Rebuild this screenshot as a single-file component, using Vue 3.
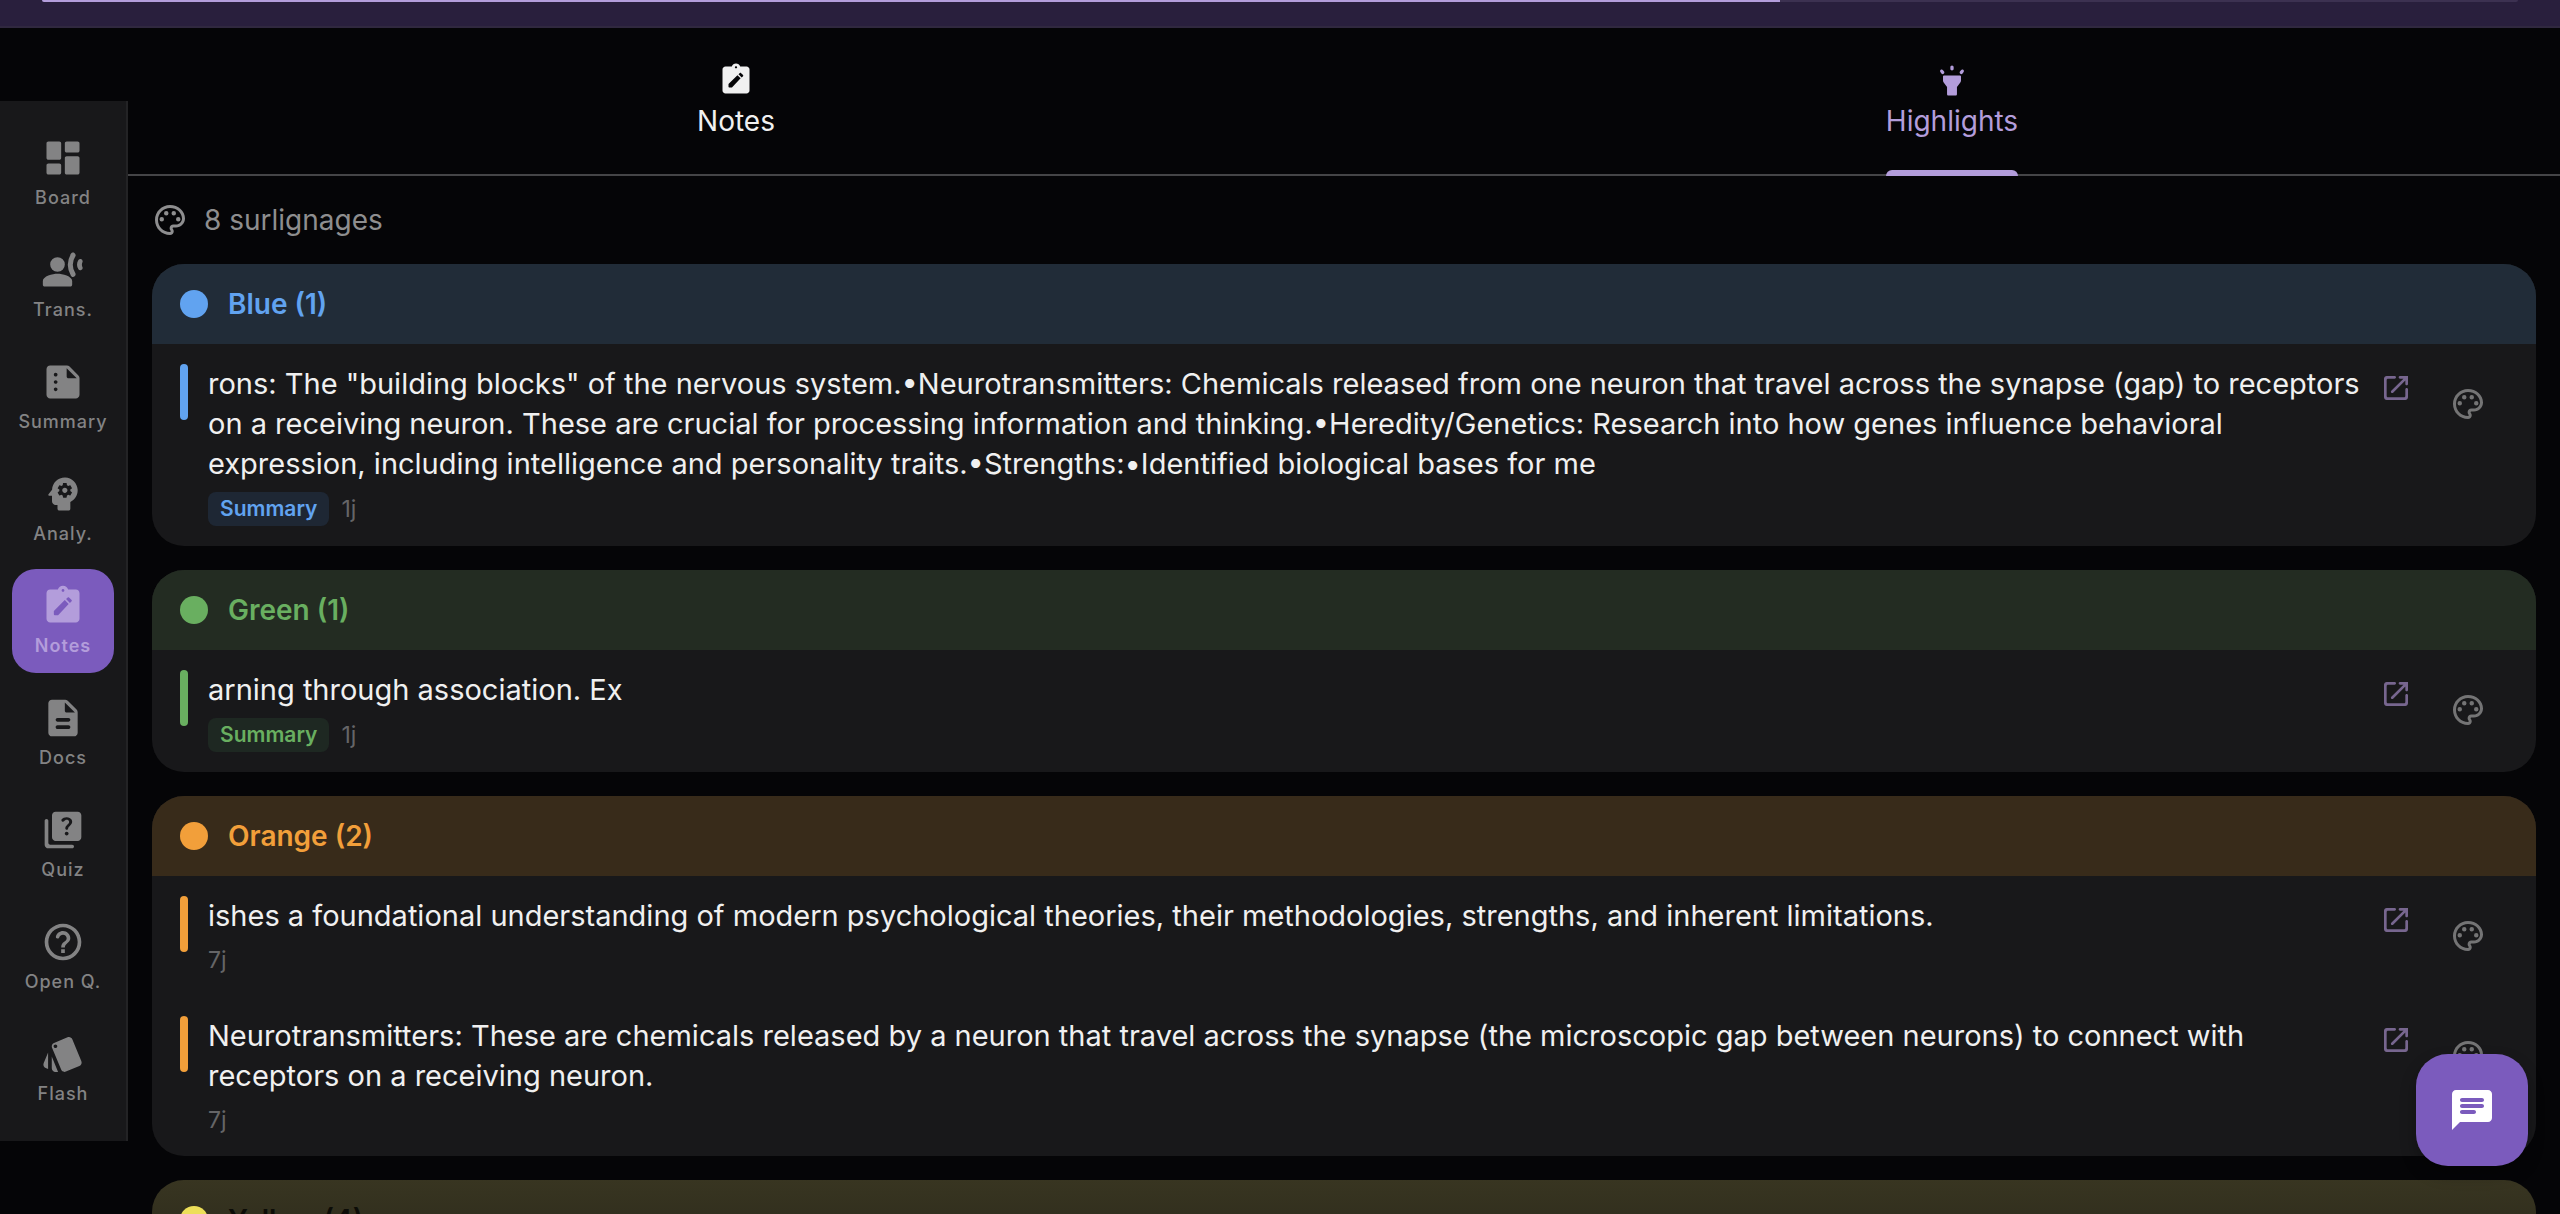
<script setup>
import { ref } from 'vue'

const activeTab = ref('highlights')
const activeNav = ref('notes')

const icons = {
  board: 'M4 13h6c.55 0 1-.45 1-1V4c0-.55-.45-1-1-1H4c-.55 0-1 .45-1 1v8c0 .55.45 1 1 1zm0 8h6c.55 0 1-.45 1-1v-4c0-.55-.45-1-1-1H4c-.55 0-1 .45-1 1v4c0 .55.45 1 1 1zm10 0h6c.55 0 1-.45 1-1v-8c0-.55-.45-1-1-1h-6c-.55 0-1 .45-1 1v8c0 .55.45 1 1 1zM13 4v4c0 .55.45 1 1 1h6c.55 0 1-.45 1-1V4c0-.55-.45-1-1-1h-6c-.55 0-1 .45-1 1z',
  voice: 'M9 5a4 4 0 1 0 0 8 4 4 0 0 0 0-8zm0 9c-2.67 0-8 1.34-8 4v2c0 .55.45 1 1 1h14c.55 0 1-.45 1-1v-2c0-2.66-5.33-4-8-4zM16.3 3.2a12 12 0 0 0 0 11.9c.4.7 1.3.9 1.9.5.7-.5.9-1.3.5-2a8 8 0 0 1 0-8.9c.4-.7.2-1.5-.5-2-.6-.4-1.5-.2-1.9.5zM20.4 6.6c-1 1.6-1 3.4 0 5 .3.6 1 .7 1.6.4.6-.3.9-.9.6-1.6-.4-.8-.4-1.8 0-2.6.3-.6 0-1.3-.6-1.6-.6-.3-1.2-.1-1.6.4z',
  summary: 'M14.17 3H5c-1.1 0-2 .9-2 2v14c0 1.1.9 2 2 2h14c1.1 0 2-.9 2-2V9.83c0-.53-.21-1.04-.59-1.41l-4.83-4.83c-.37-.38-.88-.59-1.41-.59zM8 17c-.55 0-1-.45-1-1s.45-1 1-1 1 .45 1 1-.45 1-1 1zm0-4c-.55 0-1-.45-1-1s.45-1 1-1 1 .45 1 1-.45 1-1 1zm0-4c-.55 0-1-.45-1-1s.45-1 1-1 1 .45 1 1-.45 1-1 1zm6 0V4.5l5.5 5.5H15c-.55 0-1-.45-1-1z',
  analysis: 'M13 8.57c-.79 0-1.43.64-1.43 1.43s.64 1.43 1.43 1.43 1.43-.64 1.43-1.43-.64-1.43-1.43-1.43zM13.21 3c-3.84-.11-7 2.87-7.19 6.64l-1.92 2.53c-.25.33-.01.83.4.83H6v3c0 1.1.9 2 2 2h1v2c0 .55.45 1 1 1h5c.55 0 1-.45 1-1v-3.68c2.44-1.16 4.1-3.68 4-6.58C19.86 6.11 16.83 3.1 13.21 3zM16 10c0 .13-.01.26-.02.39l.83.66c.08.06.1.16.05.25l-.8 1.39c-.05.09-.16.12-.24.09l-.99-.4c-.21.16-.43.29-.67.39L14 13.83c-.01.1-.1.17-.2.17h-1.6c-.1 0-.18-.07-.2-.17l-.15-1.06c-.25-.1-.47-.23-.68-.39l-.99.4c-.09.03-.2 0-.25-.09l-.8-1.39c-.05-.08-.03-.19.05-.25l.84-.66c-.01-.13-.02-.26-.02-.39s.02-.27.04-.39l-.85-.66c-.08-.06-.1-.16-.05-.26l.8-1.38c.05-.09.15-.12.24-.09l1 .4c.2-.15.43-.29.67-.39L12 6.17c.02-.1.1-.17.2-.17h1.6c.1 0 .18.07.2.17l.15 1.06c.24.1.46.23.67.39l1-.4c.09-.03.2 0 .24.09l.8 1.38c.05.09.03.2-.05.26l-.85.66c.03.12.04.25.04.39z',
  notes: 'M19 3h-4.18C14.4 1.84 13.3 1 12 1s-2.4.84-2.82 2H5c-1.1 0-2 .9-2 2v14c0 1.1.9 2 2 2h14c1.1 0 2-.9 2-2V5c0-1.1-.9-2-2-2zm-7-.25c.41 0 .75.34.75.75s-.34.75-.75.75-.75-.34-.75-.75.34-.75.75-.75zM9.1 17H7.5c-.28 0-.5-.22-.5-.5v-1.59c0-.13.05-.26.15-.35l5.81-5.79 2.12 2.12-5.62 5.96c-.1.1-.22.15-.36.15zm7.6-7.55-.91.91-2.12-2.12.91-.91c.2-.2.51-.2.71 0l1.41 1.41c.2.2.2.51 0 .71z',
  docs: 'M14.59 2.59c-.38-.38-.89-.59-1.42-.59H6c-1.1 0-2 .9-2 2v16c0 1.1.89 2 1.99 2H18c1.1 0 2-.9 2-2V8.83c0-.53-.21-1.04-.59-1.41l-4.82-4.83zM15 18H9c-.55 0-1-.45-1-1s.45-1 1-1h6c.55 0 1 .45 1 1s-.45 1-1 1zm0-4H9c-.55 0-1-.45-1-1s.45-1 1-1h6c.55 0 1 .45 1 1s-.45 1-1 1zm-2-6V3.5L18.5 9H14c-.55 0-1-.45-1-1z',
  quiz: 'M3 6c-.55 0-1 .45-1 1v13c0 1.1.9 2 2 2h13c.55 0 1-.45 1-1s-.45-1-1-1H5c-.55 0-1-.45-1-1V7c0-.55-.45-1-1-1zM20 2H8c-1.1 0-2 .9-2 2v12c0 1.1.9 2 2 2h12c1.1 0 2-.9 2-2V4c0-1.1-.9-2-2-2zm-5.99 13c-.59 0-1.05-.47-1.05-1.05 0-.59.47-1.04 1.05-1.04.59 0 1.04.45 1.04 1.04-.01.58-.45 1.05-1.04 1.05zm2.5-6.17c-.63.93-1.23 1.21-1.56 1.81-.08.14-.13.26-.16.49-.05.39-.36.68-.75.68h-.03c-.44 0-.79-.38-.75-.82.03-.28.09-.57.25-.84.41-.73 1.18-1.16 1.63-1.8.48-.68.21-1.94-1.14-1.94-.61 0-1.01.32-1.26.7-.24.35-.67.51-1.06.35-.51-.2-.72-.82-.4-1.27C11.88 5.48 12.8 5 13.99 5c1.3 0 2.2.59 2.65 1.33.39.64.62 1.83-.13 2.5z',
  help: 'M11 16h2v2h-2zm1-14C6.48 2 2 6.48 2 12s4.48 10 10 10 10-4.48 10-10S17.52 2 12 2zm0 18c-4.41 0-8-3.59-8-8s3.59-8 8-8 8 3.59 8 8-3.59 8-8 8zm0-14c-1.86 0-3.42 1.26-3.87 2.97-.15.55.25 1.09.82 1.09h.2c.4 0 .72-.3.85-.68C10.28 8.57 11.07 8 12 8c1.1 0 2 .9 2 2 0 2-3 1.75-3 5h2c0-2.25 3-2.5 3-5 0-2.21-1.79-4-4-4z',
  flash: 'M2.53 19.65l1.34.56v-9.03l-2.43 5.86c-.41 1.02.08 2.19 1.09 2.61zm19.5-3.7L17.07 3.98c-.31-.75-1.04-1.21-1.81-1.23-.26 0-.53.04-.79.15L7.1 5.95c-.75.31-1.21 1.03-1.23 1.8-.01.27.04.54.15.8l4.96 11.97c.31.76 1.05 1.22 1.83 1.23.26 0 .52-.05.77-.15l7.36-3.05c1.02-.42 1.51-1.59 1.09-2.6zM7.88 8.75c-.55 0-1-.45-1-1s.45-1 1-1 1 .45 1 1-.45 1-1 1zm-2 11c0 1.1.9 2 2 2h1.45l-3.45-8.34v6.34z',
  torch: 'M6.6 9h10.8c.33 0 .6.27.6.6v2.7c0 .5-.15.9-.45 1.3L15.3 16.6v4.9c0 .55-.35.9-.9.9H9.6c-.55 0-.9-.35-.9-.9v-4.9L6.45 13.6c-.3-.4-.45-.8-.45-1.3V9.6c0-.33.27-.6.6-.6zM12 2.4c-.65 0-1.1.5-1.1 1.1v1c0 .6.45 1.1 1.1 1.1s1.1-.5 1.1-1.1v-1c0-.6-.45-1.1-1.1-1.1zM4.5 5.2c-.5.35-.6 1-.25 1.5l.7.95c.35.5 1 .6 1.5.25s.6-1 .25-1.5L6 5.45c-.35-.5-1-.6-1.5-.25zM19.5 5.2c-.5-.35-1.15-.25-1.5.25l-.7.95c-.35.5-.25 1.15.25 1.5s1.15.25 1.5-.25l.7-.95c.35-.5.25-1.15-.25-1.5z',
  palette: 'M12 22C6.49 22 2 17.51 2 12S6.49 2 12 2s10 4.04 10 9c0 3.31-2.69 6-6 6h-1.77c-.28 0-.5.22-.5.5 0 .12.05.23.13.33.41.47.64 1.06.64 1.67 0 1.38-1.12 2.5-2.5 2.5zm0-18c-4.41 0-8 3.59-8 8s3.59 8 8 8c.28 0 .5-.22.5-.5 0-.16-.08-.28-.14-.35-.41-.46-.63-1.05-.63-1.65 0-1.38 1.12-2.5 2.5-2.5H16c2.21 0 4-1.79 4-4 0-3.86-3.59-7-8-7zM6.5 10a1.5 1.5 0 1 0 0 3 1.5 1.5 0 0 0 0-3zm3-4a1.5 1.5 0 1 0 0 3 1.5 1.5 0 0 0 0-3zm5 0a1.5 1.5 0 1 0 0 3 1.5 1.5 0 0 0 0-3zm3 4a1.5 1.5 0 1 0 0 3 1.5 1.5 0 0 0 0-3z',
  open: 'M18 19H6c-.55 0-1-.45-1-1V6c0-.55.45-1 1-1h5c.55 0 1-.45 1-1s-.45-1-1-1H5c-1.11 0-2 .9-2 2v14c0 1.1.9 2 2 2h14c1.1 0 2-.9 2-2v-6c0-.55-.45-1-1-1s-1 .45-1 1v5c0 .55-.45 1-1 1zM14 4c0 .55.45 1 1 1h2.59l-9.13 9.13c-.39.39-.39 1.02 0 1.41.39.39 1.02.39 1.41 0L19 6.41V9c0 .55.45 1 1 1s1-.45 1-1V3h-6c-.55 0-1 .45-1 1z',
  chat: 'M20 2H4c-1.1 0-1.99.9-1.99 2L2 22l4-4h14c1.1 0 2-.9 2-2V4c0-1.1-.9-2-2-2zm-7 12H7c-.55 0-1-.45-1-1s.45-1 1-1h6c.55 0 1 .45 1 1s-.45 1-1 1zm4-3H7c-.55 0-1-.45-1-1s.45-1 1-1h10c.55 0 1 .45 1 1s-.45 1-1 1zm0-3H7c-.55 0-1-.45-1-1s.45-1 1-1h10c.55 0 1 .45 1 1s-.45 1-1 1z',
}

const navItems = [
  { id: 'board', label: 'Board', icon: icons.board },
  { id: 'trans', label: 'Trans.', icon: icons.voice },
  { id: 'summary', label: 'Summary', icon: icons.summary },
  { id: 'analysis', label: 'Analy.', icon: icons.analysis },
  { id: 'notes', label: 'Notes', icon: icons.notes },
  { id: 'docs', label: 'Docs', icon: icons.docs },
  { id: 'quiz', label: 'Quiz', icon: icons.quiz },
  { id: 'open', label: 'Open Q.', icon: icons.help },
  { id: 'flash', label: 'Flash', icon: icons.flash },
]

const tabs = [
  { id: 'notes', label: 'Notes', icon: icons.notes },
  { id: 'highlights', label: 'Highlights', icon: icons.torch },
]

const groups = [
  {
    color: 'blue',
    title: 'Blue (1)',
    items: [
      {
        text: 'rons: The "building blocks" of the nervous system.•Neurotransmitters: Chemicals released from one neuron that travel across the synapse (gap) to receptors on a receiving neuron. These are crucial for processing information and thinking.•Heredity/Genetics: Research into how genes influence behavioral expression, including intelligence and personality traits.•Strengths:•Identified biological bases for me',
        tag: 'Summary',
        age: '1j',
      },
    ],
  },
  {
    color: 'green',
    title: 'Green (1)',
    items: [{ text: 'arning through association. Ex', tag: 'Summary', age: '1j' }],
  },
  {
    color: 'orange',
    title: 'Orange (2)',
    items: [
      {
        text: 'ishes a foundational understanding of modern psychological theories, their methodologies, strengths, and inherent limitations.',
        age: '7j',
      },
      {
        text: 'Neurotransmitters: These are chemicals released by a neuron that travel across the synapse (the microscopic gap between neurons) to connect with receptors on a receiving neuron.',
        age: '7j',
      },
    ],
  },
  { color: 'yellow', title: 'Yellow (4)', items: [] },
]
</script>

<template>
  <div class="app">
    <header class="topbar">
      <div class="progress">
        <div class="progress-value"></div>
      </div>
    </header>

    <div class="body">
      <nav class="sidebar">
        <button
          v-for="item in navItems"
          :key="item.id"
          type="button"
          class="nav-item"
          :class="{ active: item.id === activeNav }"
          @click="activeNav = item.id"
        >
          <svg class="nav-icon" viewBox="0 0 24 24" aria-hidden="true"><path :d="item.icon" /></svg>
          <span>{{ item.label }}</span>
        </button>
      </nav>

      <main class="content">
        <div class="tabs" role="tablist">
          <button
            v-for="tab in tabs"
            :key="tab.id"
            type="button"
            role="tab"
            class="tab"
            :class="{ active: tab.id === activeTab }"
            :aria-selected="tab.id === activeTab"
            @click="activeTab = tab.id"
          >
            <span class="tab-inner">
              <svg class="icon" viewBox="0 0 24 24" aria-hidden="true"><path :d="tab.icon" /></svg>
              <span>{{ tab.label }}</span>
            </span>
          </button>
        </div>

        <div class="list">
          <div class="count">
            <svg class="icon" viewBox="0 0 24 24" aria-hidden="true"><path :d="icons.palette" /></svg>
            <span>8 surlignages</span>
          </div>

          <section v-for="group in groups" :key="group.color" class="card" :class="group.color">
            <h2 class="card-header">
              <span class="dot"></span>
              <span>{{ group.title }}</span>
            </h2>
            <article v-for="item in group.items" :key="item.text" class="highlight">
              <span class="bar"></span>
              <div class="highlight-body">
                <p>{{ item.text }}</p>
                <div class="meta">
                  <span v-if="item.tag" class="tag">{{ item.tag }}</span>
                  <span class="age">{{ item.age }}</span>
                </div>
              </div>
              <button type="button" class="open" aria-label="Ouvrir">
                <svg viewBox="0 0 24 24" aria-hidden="true"><path :d="icons.open" /></svg>
              </button>
              <button type="button" class="recolor" aria-label="Couleur">
                <svg class="icon" viewBox="0 0 24 24" aria-hidden="true"><path :d="icons.palette" /></svg>
              </button>
            </article>
          </section>
        </div>
      </main>
    </div>

    <button type="button" class="fab" aria-label="Chat">
      <svg viewBox="0 0 24 24" aria-hidden="true"><path :d="icons.chat" /></svg>
    </button>
  </div>
</template>

<style>
body {
  background: #050507;
  overflow: hidden;
}
</style>

<style scoped>
.app {
  height: 100vh;
  display: flex;
  flex-direction: column;
  overflow: hidden;
  font-family: Inter, "Noto Sans", sans-serif;
  font-size: 28px;
  color: #f0f0f0;
}

button {
  padding: 0;
  border: 0;
  background: none;
  font: inherit;
  color: inherit;
  cursor: pointer;
}

svg {
  display: block;
  fill: currentColor;
}

.icon {
  width: 36px;
  height: 36px;
}

.topbar {
  flex: none;
  height: 26px;
  padding: 0 42px;
  background: #291f3d;
  border-bottom: 2px solid #30283f;
}

.progress {
  height: 2px;
  border-radius: 0 0 2px 2px;
  overflow: hidden;
  background: #3c3151;
}

.progress-value {
  width: 70.2%;
  height: 2px;
  background: #b39ddb;
}

.body {
  flex: 1;
  min-height: 0;
  display: flex;
}

/* side navigation */
.sidebar {
  flex: none;
  align-self: center;
  display: flex;
  flex-direction: column;
  gap: 8px;
  width: 102px;
  padding: 20px 12px;
  background: #18181a;
  border-right: 2px solid #232325;
}

.nav-item {
  display: flex;
  flex-direction: column;
  align-items: center;
  gap: 6px;
  padding: 15px 0;
  border-radius: 24px;
  font-size: 18px;
  font-weight: 500;
  line-height: 24px;
  letter-spacing: 1px;
  color: #838384;
}

.nav-item.active {
  background: #7b5bbd;
  color: #b39ddb;
  font-weight: 600;
}

.nav-icon {
  width: 44px;
  height: 44px;
}

.content {
  flex: 1;
  min-width: 0;
  display: flex;
  flex-direction: column;
}

/* tabs */
.tabs {
  flex: none;
  display: flex;
  height: 146px;
  border-bottom: 2px solid #454547;
}

.tab {
  flex: 1;
  display: flex;
  justify-content: center;
}

.tab-inner {
  display: flex;
  flex-direction: column;
  align-items: center;
  gap: 3px;
  height: 148px;
  padding-top: 34px;
  box-sizing: border-box;
  line-height: 40px;
}

.tab.active {
  color: #b39ddb;
}

.tab.active .tab-inner {
  position: relative;
}

.tab.active .tab-inner::after {
  content: "";
  position: absolute;
  left: 0;
  right: 0;
  bottom: 0;
  height: 6px;
  border-radius: 6px 6px 0 0;
  background: #b39ddb;
}

/* highlights */
.list {
  flex: 1;
  min-height: 0;
  padding: 24px 24px 0;
  display: flex;
  flex-direction: column;
  gap: 24px;
}

.count {
  flex: none;
  display: flex;
  align-items: center;
  gap: 16px;
  line-height: 40px;
  color: #8e8e8f;
}

.card {
  flex: none;
  border-radius: 32px;
  overflow: hidden;
  background: #18181a;
}

.card-header {
  display: flex;
  align-items: center;
  gap: 20px;
  height: 80px;
  margin: 0;
  padding: 0 28px;
  background: var(--tint);
  color: var(--accent);
  font-size: 28px;
  font-weight: 600;
}

.dot {
  width: 28px;
  height: 28px;
  border-radius: 50%;
  background: var(--accent);
}

.blue {
  --accent: #61a3f0;
  --tint: #212c38;
  --tag: #1e2734;
}

.green {
  --accent: #69af60;
  --tint: #232c22;
  --tag: #1e2822;
}

.orange {
  --accent: #f29f3a;
  --tint: #382b1a;
  --tag: #2d251b;
}

.yellow {
  --accent: #eddf59;
  --tint: linear-gradient(#383521, #2b291b);
}

.yellow .card-header {
  color: #0c0c07;
}

.highlight {
  display: flex;
  align-items: flex-start;
  padding: 20px 28px;
}

.bar {
  flex: none;
  width: 8px;
  height: 56px;
  margin-right: 20px;
  border-radius: 4px;
  background: var(--accent);
}

.highlight-body {
  flex: 1;
  min-width: 0;
  margin-right: 16px;
}

.highlight-body p {
  margin: 0 0 8px;
  font-size: 29px;
  line-height: 40px;
}

.meta {
  display: flex;
  align-items: center;
  gap: 12px;
  line-height: 32px;
}

.tag {
  padding: 4px 12px;
  border-radius: 8px;
  background: var(--tag);
  color: var(--accent);
  font-size: 21px;
  font-weight: 600;
  line-height: 26px;
}

.age {
  font-size: 23px;
  color: #656567;
}

.open {
  flex: none;
  margin: 8px 16px 0 0;
  color: #77668f;
}

.open svg {
  width: 32px;
  height: 32px;
}

.recolor {
  flex: none;
  display: grid;
  place-items: center;
  width: 80px;
  height: 80px;
  color: #747475;
}

.fab {
  position: fixed;
  right: 32px;
  bottom: 48px;
  display: grid;
  place-items: center;
  width: 112px;
  height: 112px;
  border-radius: 32px;
  background: #7b5bbd;
  color: #fff;
  box-shadow: 0 8px 16px rgba(0, 0, 0, 0.3);
}

.fab svg {
  width: 48px;
  height: 48px;
}
</style>
